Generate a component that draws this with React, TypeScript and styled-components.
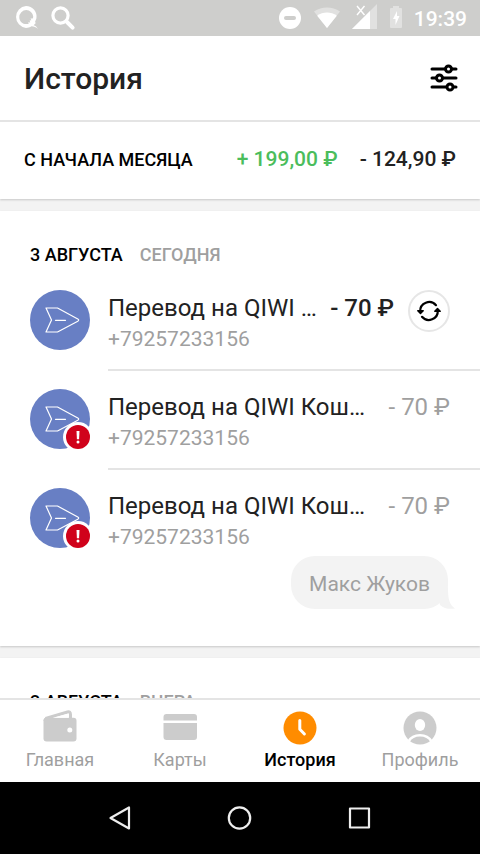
import React from "react";
import styled, { createGlobalStyle, css } from "styled-components";

const GlobalStyle = createGlobalStyle`
  *, *::before, *::after { box-sizing: border-box; }
  body {
    margin: 0;
    background: #ffffff;
    color: #222222;
    font-family: Roboto, "Noto Sans", sans-serif;
  }
  h1, h2, p, ul { margin: 0; padding: 0; }
  ul { list-style: none; }
  button {
    margin: 0;
    padding: 0;
    border: 0;
    background: none;
    color: inherit;
    font: inherit;
    cursor: pointer;
  }
  svg { display: block; flex: none; }
`;

const Screen = styled.div`
  display: flex;
  flex-direction: column;
  height: 100vh;
  overflow: hidden;
`;

const StatusBar = styled.div`
  display: flex;
  flex: none;
  align-items: center;
  justify-content: space-between;
  height: 36px;
  padding: 0 13px 0 14px;
  background: #cececc;
  color: #ffffff;
`;

const StatusGroup = styled.div<{ $gap: number }>`
  display: flex;
  align-items: center;
  gap: ${(p) => p.$gap}px;
`;

const Clock = styled.time`
  padding-top: 2px;
  font-size: 21px;
  line-height: 34px;
  font-weight: 500;
`;

const Header = styled.header`
  display: flex;
  flex: none;
  align-items: center;
  justify-content: space-between;
  height: 86px;
  padding: 0 21px 0 24px;
  border-bottom: 2px solid #e4e4e4;
`;

const Title = styled.h1`
  padding-top: 2px;
  font-size: 30px;
  line-height: 36px;
  font-weight: 500;
`;

const IconButton = styled.button`
  display: flex;
  align-items: center;
  justify-content: center;
  color: #000000;
`;

const Content = styled.main`
  flex: 1;
  min-height: 0;
  overflow: hidden;
  background: #f3f3f3;
`;

const Panel = styled.section`
  margin-bottom: 12px;
  background: #ffffff;
  box-shadow: 0 1px 2px rgba(0, 0, 0, 0.18);
`;

const Summary = styled(Panel)`
  display: flex;
  align-items: center;
  justify-content: space-between;
  padding: 24px 24px 27px;
`;

const SummaryLabel = styled.h2`
  padding-top: 2px;
  color: #000000;
  font-size: 18px;
  line-height: 24px;
  font-weight: 500;
`;

const Totals = styled.div`
  display: flex;
  gap: 22px;
`;

const Total = styled.span<{ $income?: boolean }>`
  color: ${(p) => (p.$income ? "#4bbd5c" : "#222222")};
  font-size: 21px;
  line-height: 26px;
  font-weight: 500;
  white-space: nowrap;
`;

const Day = styled(Panel)`
  padding: 32px 0 37px 30px;
`;

const DayHeading = styled.h2`
  display: flex;
  gap: 17px;
  color: #000000;
  font-size: 18px;
  line-height: 24px;
  font-weight: 500;
`;

const DayNote = styled.span`
  color: #9f9f9f;
`;

const Payments = styled.ul`
  padding-top: 5px;
`;

const Payment = styled.li`
  display: flex;
  gap: 18px;
  padding-top: 18px;
`;

const Avatar = styled.div`
  position: relative;
  flex: none;
  width: 60px;
  height: 60px;
`;

const Badge = styled.span`
  position: absolute;
  right: -3px;
  bottom: -3px;
`;

const PaymentBody = styled.div<{ $divided: boolean }>`
  flex: 1;
  min-width: 0;
  ${(p) =>
    p.$divided &&
    css`
      padding-bottom: 15px;
      border-bottom: 2px solid #e4e4e4;
    `}
`;

const PaymentLine = styled.div`
  display: flex;
  align-items: flex-start;
  padding-right: 30px;
`;

const PaymentText = styled.div`
  flex: 1;
  min-width: 0;
  padding-top: 2px;
`;

const NameRow = styled.div`
  display: flex;
  justify-content: space-between;
  gap: 12px;
  line-height: 32px;
`;

const Name = styled.p`
  min-width: 0;
  overflow: hidden;
  font-size: 24px;
  text-overflow: ellipsis;
  white-space: nowrap;
`;

const Amount = styled.span<{ $failed: boolean }>`
  color: ${(p) => (p.$failed ? "#9f9f9f" : "#222222")};
  font-size: 24px;
  font-weight: ${(p) => (p.$failed ? 400 : 500)};
  white-space: nowrap;
`;

const Phone = styled.p`
  color: #9f9f9f;
  font-size: 21px;
  line-height: 30px;
`;

const RepeatButton = styled(IconButton)`
  flex: none;
  width: 42px;
  height: 42px;
  margin-left: 14px;
  border: 2px solid #e6e6e6;
  border-radius: 50%;
`;

const Comment = styled.p`
  position: relative;
  width: fit-content;
  margin: 4px 32px 0 auto;
  padding: 14px 18px 11px;
  border-radius: 24px;
  background: #f3f3f3;
  color: #9f9f9f;
  font-size: 21px;
  line-height: 28px;
`;

const CommentTail = styled.svg`
  position: absolute;
  right: -7px;
  bottom: 0;
`;

const Tabs = styled.nav`
  display: flex;
  flex: none;
  height: 84px;
  border-top: 2px solid #e4e4e4;
  background: #ffffff;
`;

const Tab = styled.button<{ $active?: boolean }>`
  display: flex;
  flex: 1;
  flex-direction: column;
  align-items: center;
  padding-top: 8px;
  color: ${(p) => (p.$active ? "#000000" : "#9f9f9f")};
  font-size: 18px;
  line-height: 24px;
  font-weight: ${(p) => (p.$active ? 500 : 400)};
`;

const SystemBar = styled.nav`
  display: flex;
  flex: none;
  justify-content: center;
  height: 72px;
  background: #000000;
`;

const SystemButton = styled(IconButton)`
  width: 25%;
  color: #eeeeee;
`;

const QiwiIcon = () => (
  <svg width="26" height="26" viewBox="0 0 26 26" fill="currentColor">
    <path
      fillRule="evenodd"
      d="M12 1a10.6 10.6 0 0 1 10.4 12.6L21 17l.8 1-2.2 2.2c2 .5 3.300 1.800 4.400 3.800-1.900-1.800-4-2.500-6.500-2.700C15.900 22.500 14 22.900 12 22.900A11 11 0 0 1 12 1Zm.3 4.100a7 7 0 0 0-7 7.100c0 4 3.200 6.900 7 6.900 1 0 1.800-.2 2.600-.6l-.9-1.300 2.200.2-.6-1.900 1.800-.3-.9-1.700 2.200-.1c.4-.8.500-1.200.5-2a7 7 0 0 0-6.900-6.300Z"
    />
  </svg>
);

const SearchIcon = () => (
  <svg width="26" height="26" viewBox="0 0 26 26" fill="none" stroke="currentColor">
    <circle cx="10.500" cy="10.500" r="7.600" strokeWidth="3.200" />
    <path d="m17 17 5.600 5.600" strokeWidth="4" strokeLinecap="round" />
  </svg>
);

const DoNotDisturbIcon = () => (
  <svg width="24" height="24" viewBox="0 0 24 24">
    <circle cx="12" cy="12" r="11" fill="currentColor" />
    <path d="M8 12h8" stroke="#cececc" strokeWidth="4" strokeLinecap="round" />
  </svg>
);

const WifiIcon = () => (
  <svg width="26" height="24" viewBox="0 0 26 24" fill="currentColor">
    <path d="M13 22 0 5.600C8 .2 18 .2 26 5.600Z" opacity=".4" />
    <path d="M13 22 3.200 9.800c5.800-4.400 13.800-4.400 19.600 0Z" />
  </svg>
);

const SignalIcon = () => (
  <svg width="26" height="28" viewBox="0 0 26 28" fill="currentColor">
    <path d="M25 0v25H0Z" opacity=".4" />
    <path d="M18 7v18H0Z" />
    <path d="m5 2 7.500 9M12.500 2 5 11" stroke="#cececc" strokeWidth="4" />
    <path d="m5 2 7.500 9M12.500 2 5 11" stroke="currentColor" strokeWidth="1.400" />
  </svg>
);

const BatteryIcon = () => (
  <svg width="12" height="24" viewBox="0 0 12 24" fill="currentColor">
    <path d="M3 0h6v2h2q1 0 1 1v18q0 1-1 1H1q-1 0-1-1V3q0-1 1-1h2Z" opacity=".4" />
    <path d="M7 5 3 13h2.500v6L9.500 10H7Z" />
  </svg>
);

const FilterIcon = () => (
  <svg width="30" height="30" viewBox="0 0 30 30" stroke="currentColor" strokeLinecap="round">
    <path d="M3 6h24M3 15h24M3 24h24" strokeWidth="3" />
    <g fill="#ffffff" strokeWidth="3">
      <circle cx="19.500" cy="6" r="3" />
      <circle cx="10.500" cy="15" r="3" />
      <circle cx="21" cy="24" r="3" />
    </g>
  </svg>
);

const TransferIcon = () => (
  <svg width="60" height="60" viewBox="0 0 60 60">
    <circle cx="30" cy="30" r="30" fill="#687fc4" />
    <g fill="none" stroke="#ffffff" strokeWidth="1.200" strokeLinejoin="round" strokeLinecap="round">
      <path d="M16 18h11.500l20.300 11q1.800 1.100 0 2.200L27.500 42H16l5.500-12Z" />
      <path d="M25.500 30.300h10" />
    </g>
  </svg>
);

const FailedIcon = () => (
  <svg width="30" height="30" viewBox="0 0 30 30" role="img" aria-label="Ошибка">
    <circle cx="15" cy="15" r="15" fill="#ffffff" />
    <circle cx="15" cy="15" r="12" fill="#d0021b" />
    <path d="M13.500 9h3l-.4 8.200h-2.200Z" fill="#ffffff" />
    <circle cx="15" cy="20" r="1.500" fill="#ffffff" />
  </svg>
);

const RepeatIcon = () => (
  <svg width="26" height="26" viewBox="0 0 26 26" fill="none" stroke="#000000">
    <g strokeWidth="2.200" strokeLinecap="round">
      <path d="M4.200 13.500A9 9 0 0 1 20 7.200" />
      <path d="M21.800 12.500A9 9 0 0 1 6 18.800" />
    </g>
    <g fill="#000000" strokeWidth="1.500" strokeLinejoin="round">
      <path d="M1.800 12.800h5.400l-2.700 2.600Z" />
      <path d="M24.200 13.200h-5.400l2.700-2.600Z" />
    </g>
  </svg>
);

const WalletIcon = () => (
  <svg width="40" height="40" viewBox="0 0 40 40">
    <path
      d="M5.500 10.500 27.500 4Q30.500 3.200 30.500 6.500v4"
      fill="none"
      stroke="#cccccc"
      strokeWidth="3"
      strokeLinejoin="round"
    />
    <path d="M3.500 13q0-3 3-4l4 1v3Z" fill="#cccccc" />
    <rect x="3.500" y="9.800" width="33" height="23.700" rx="3" fill="#cccccc" />
    <path d="M13 9.800 27 5.900q1.500-.3 1.500 1.200v2.700Z" fill="#ffffff" />
    <circle cx="29.800" cy="22" r="2.500" fill="#ffffff" />
  </svg>
);

const CardIcon = () => (
  <svg width="40" height="40" viewBox="0 0 40 40" fill="#cccccc">
    <path d="M6.500 6h27.500q3 0 3 3v3.500H3.500V9q0-3 3-3Z" />
    <path d="M3.500 15H37v14q0 3-3 3H6.500q-3 0-3-3Z" />
  </svg>
);

const HistoryIcon = () => (
  <svg width="40" height="40" viewBox="0 0 40 40">
    <circle cx="20" cy="20" r="16.500" fill="#ff8c00" />
    <path
      d="M19.800 12.500v8.800l4.600 4.700"
      fill="none"
      stroke="#ffffff"
      strokeWidth="3"
      strokeLinecap="round"
      strokeLinejoin="round"
    />
  </svg>
);

const ProfileIcon = () => (
  <svg width="40" height="40" viewBox="0 0 40 40">
    <circle cx="20" cy="20" r="16.500" fill="#cccccc" />
    <ellipse cx="20" cy="17" rx="5.200" ry="6" fill="#ffffff" />
    <path d="M8.500 33.500Q12 27.300 20 27.300T31.500 33.500" fill="none" stroke="#ffffff" strokeWidth="2.600" />
  </svg>
);

const BackIcon = () => (
  <svg width="28" height="28" viewBox="0 0 28 28" fill="none" stroke="currentColor" strokeWidth="2.200" strokeLinejoin="round">
    <path d="M23 3.500v21L4.500 14Z" />
  </svg>
);

const HomeIcon = () => (
  <svg width="28" height="28" viewBox="0 0 28 28" fill="none" stroke="currentColor" strokeWidth="2.200">
    <circle cx="13.500" cy="14" r="10.700" />
  </svg>
);

const RecentIcon = () => (
  <svg width="28" height="28" viewBox="0 0 28 28" fill="none" stroke="currentColor" strokeWidth="2.200" strokeLinejoin="round">
    <rect x="4" y="4.500" width="19" height="19" />
  </svg>
);

type PaymentData = {
  id: number;
  name: string;
  phone: string;
  amount: string;
  failed: boolean;
  comment?: string;
};

const payments: PaymentData[] = [
  { id: 1, name: "Перевод на QIWI Кошелек", phone: "+79257233156", amount: "- 70 ₽", failed: false },
  { id: 2, name: "Перевод на QIWI Кошелек", phone: "+79257233156", amount: "- 70 ₽", failed: true },
  {
    id: 3,
    name: "Перевод на QIWI Кошелек",
    phone: "+79257233156",
    amount: "- 70 ₽",
    failed: true,
    comment: "Макс Жуков",
  },
];

const tabs = [
  { label: "Главная", icon: <WalletIcon /> },
  { label: "Карты", icon: <CardIcon /> },
  { label: "История", icon: <HistoryIcon />, active: true },
  { label: "Профиль", icon: <ProfileIcon /> },
];

export default function App() {
  return (
    <>
      <GlobalStyle />
      <Screen>
        <StatusBar>
          <StatusGroup $gap={10}>
            <QiwiIcon />
            <SearchIcon />
          </StatusGroup>
          <StatusGroup $gap={12}>
            <DoNotDisturbIcon />
            <WifiIcon />
            <SignalIcon />
            <BatteryIcon />
            <Clock>19:39</Clock>
          </StatusGroup>
        </StatusBar>

        <Header>
          <Title>История</Title>
          <IconButton aria-label="Фильтр">
            <FilterIcon />
          </IconButton>
        </Header>

        <Content>
          <Summary>
            <SummaryLabel>С НАЧАЛА МЕСЯЦА</SummaryLabel>
            <Totals>
              <Total $income>+ 199,00 ₽</Total>
              <Total>- 124,90 ₽</Total>
            </Totals>
          </Summary>

          <Day>
            <DayHeading>
              3 АВГУСТА <DayNote>СЕГОДНЯ</DayNote>
            </DayHeading>
            <Payments>
              {payments.map((p, i) => (
                <Payment key={p.id}>
                  <Avatar>
                    <TransferIcon />
                    {p.failed && (
                      <Badge>
                        <FailedIcon />
                      </Badge>
                    )}
                  </Avatar>
                  <PaymentBody $divided={i < payments.length - 1}>
                    <PaymentLine>
                      <PaymentText>
                        <NameRow>
                          <Name>{p.name}</Name>
                          <Amount $failed={p.failed}>{p.amount}</Amount>
                        </NameRow>
                        <Phone>{p.phone}</Phone>
                      </PaymentText>
                      {!p.failed && (
                        <RepeatButton aria-label="Повторить">
                          <RepeatIcon />
                        </RepeatButton>
                      )}
                    </PaymentLine>
                    {p.comment && (
                      <Comment>
                        {p.comment}
                        <CommentTail width="20" height="22" viewBox="0 0 20 22" fill="#f3f3f3">
                          <path d="M13 0C13 12 14 17 20 21.500 14 22.500 9 21.500 5 18L3 10Z" />
                        </CommentTail>
                      </Comment>
                    )}
                  </PaymentBody>
                </Payment>
              ))}
            </Payments>
          </Day>

          <Day>
            <DayHeading>
              2 АВГУСТА <DayNote>ВЧЕРА</DayNote>
            </DayHeading>
          </Day>
        </Content>

        <Tabs aria-label="Разделы">
          {tabs.map((t) => (
            <Tab key={t.label} $active={t.active} aria-current={t.active ? "page" : undefined}>
              {t.icon}
              {t.label}
            </Tab>
          ))}
        </Tabs>

        <SystemBar aria-label="Система">
          <SystemButton aria-label="Назад">
            <BackIcon />
          </SystemButton>
          <SystemButton aria-label="Домой">
            <HomeIcon />
          </SystemButton>
          <SystemButton aria-label="Недавние">
            <RecentIcon />
          </SystemButton>
        </SystemBar>
      </Screen>
    </>
  );
}
